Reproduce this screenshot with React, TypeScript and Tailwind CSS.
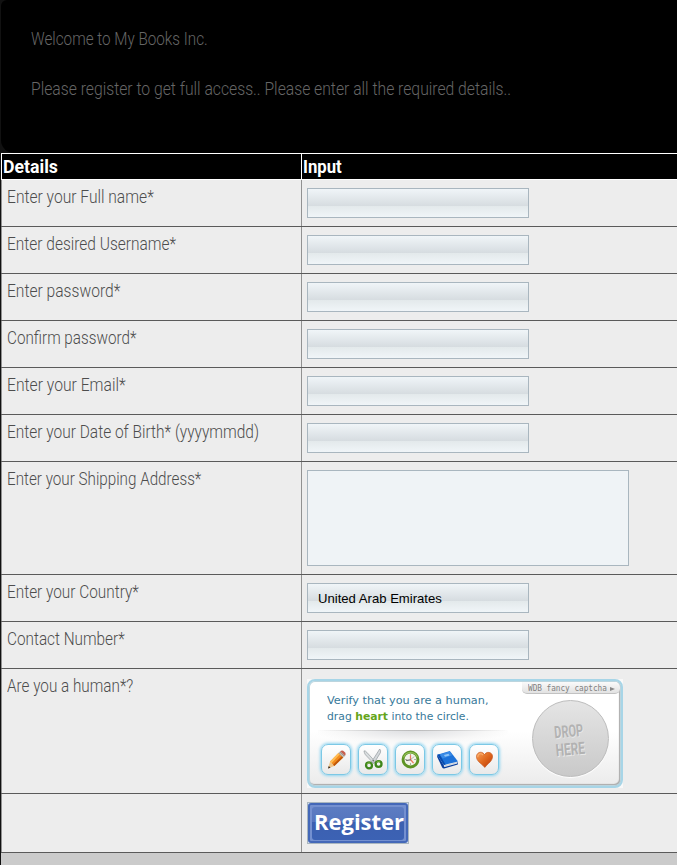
import { useLayoutEffect, useRef, useState, type ReactNode } from "react";

/** Text squeezed horizontally to a given width, for condensed lettering. */
function Fit({ w, className = "", children }: { w: number; className?: string; children: ReactNode }) {
  const ref = useRef<HTMLSpanElement>(null);
  const [scale, setScale] = useState(1);
  useLayoutEffect(() => {
    if (ref.current) setScale(w / ref.current.offsetWidth);
  }, [w]);
  return (
    <span className="block overflow-visible" style={{ width: w }}>
      <span
        ref={ref}
        className={"inline-block origin-left whitespace-nowrap " + className}
        style={{ transform: `scaleX(${scale})` }}
      >
        {children}
      </span>
    </span>
  );
}

const field =
  "block h-[30px] w-[222px] appearance-none rounded-none border border-[#a9b6bf] bg-[linear-gradient(to_bottom,#f0f5f8_0%,#d6dce0_60.7%,#e3e9eb_60.7%,#f0f5f8_100%)] px-2.5 font-['Liberation_Sans',Arial,sans-serif] text-[13px] text-black outline-none";

function Row({ label, w = 0, h = "h-[47px]", children }: { label?: string; w?: number; h?: string; children: ReactNode }) {
  return (
    <div className={"flex border-b border-[#5a5a5a] " + h}>
      <div className="w-[300px] shrink-0 border-l border-[#919191] pl-[5px] pt-[5px]">
        {label && (
          <Fit w={w} className="text-[18px] font-light leading-6 text-[#4d4d4d]">
            {label}
          </Fit>
        )}
      </div>
      <div className="grow border-l border-[#919191] pl-[5px] pt-2">{children}</div>
    </div>
  );
}

function Tile({ children }: { children: ReactNode }) {
  return (
    <div className="flex h-[31px] w-[30px] items-center justify-center rounded-[7px] border border-[#7cc8e5] bg-gradient-to-b from-white to-[#e9e9e9] shadow-[0_0_3px_1px_#8fd4f0]">
      <svg width="21" height="21" viewBox="0 0 22 22" className="shrink-0">
        {children}
      </svg>
    </div>
  );
}

function Pencil() {
  return (
    <Tile>
      <path d="M2 20.500 L4.300 13.200 L8.700 17.800 Z" fill="#efc68a" />
      <path d="M4.300 13.200 L13 4.200 L18 9 L8.700 17.800 Z" fill="#f28c1e" />
      <path d="M4.300 13.200 L13 4.200 L14.500 5.600 L5.700 14.800 Z" fill="#ffbd55" />
      <path d="M7.400 16.400 L16.400 7.500 L18 9 L8.700 17.800 Z" fill="#bf570a" />
      <path d="M13 4.200 L15 2.300 L20 7 L18 9 Z" fill="#9c9690" />
      <path d="M15 2.300 Q16.500 1 18 1.800 L20.300 4 Q21 5.800 20 7 Z" fill="#c65e4d" />
      <path d="M13.800 3.600 L18.700 8.200" stroke="#e5ded8" strokeWidth=".7" />
      <path d="M2 20.500 L2.900 17.700 L4.800 19.600 Z" fill="#3b2a20" />
    </Tile>
  );
}

function Scissors() {
  return (
    <Tile>
      <path d="M1 2 Q2.500 1.500 4 3.500 L13 13.500 L11 15 L2.500 6 Q1.200 4 1 2Z" fill="#d9dddf" stroke="#858c90" strokeWidth=".6" />
      <path d="M17.500 0 Q19 1.500 18.300 3.800 L11.500 15 L9 13.500 Z" fill="#d5d9dc" stroke="#7e878c" strokeWidth=".6" />
      <circle cx="6.300" cy="17.200" r="3.100" fill="none" stroke="#3e851a" strokeWidth="2.400" />
      <circle cx="16.300" cy="15.700" r="3.100" fill="none" stroke="#3e851a" strokeWidth="2.400" />
      <path d="M3.900 15.800 A2.900 2.900 0 0 1 7.700 14.800 M14 14.100 A2.900 2.900 0 0 1 18 13.500" fill="none" stroke="#7bb63c" />
      <circle cx="11" cy="12.300" r=".8" fill="#666" />
    </Tile>
  );
}

function Clock() {
  return (
    <Tile>
      <circle cx="11" cy="11" r="7.800" fill="#f2f3ea" stroke="#5e9425" strokeWidth="3" />
      <path d="M3.700 8.800 A7.800 7.800 0 0 1 18.300 8.800" fill="none" stroke="#91bd55" strokeWidth="1.200" />
      <path d="M11 5.500v1.500M11 15v1.500M5.500 11h1.500M15 11h1.500" stroke="#8a8c80" />
      <path d="M11 6.500 L11 11 L14.200 14.800" fill="none" stroke="#ef795c" strokeWidth="1.300" />
      <path d="M6.500 12 L11.500 11.200" stroke="#555" strokeWidth="1.100" />
      <path d="M11 11 L15 8" stroke="#999" strokeWidth=".7" />
    </Tile>
  );
}

function Book() {
  return (
    <Tile>
      <path d="M.3 6 L7.500 17.500 L22 14 L21.800 16.300 L7.500 20.300 Q6 20.400 5.300 19 L.2 8.500Z" fill="#0b3f9d" />
      <path d="M7.500 16.600 L21 13 L21.300 15.300 L8 18.900 Q6.600 18.600 7.500 16.600Z" fill="#e9edf2" />
      <path d="M8 17.700 L21 14.200" stroke="#a6b1c0" strokeWidth=".5" />
      <path d="M.3 6 L13.500 2 L22 13 L7.200 16.800 Z" fill="#1d72d9" />
      <path d="M.3 6 L2.500 5.400 L9 16.300 L7.200 16.800Z" fill="#0a4cae" />
      <path d="M3 5.700 L13.100 2.700 L16 6.500 L6 10 Z" fill="#4c9bef" opacity=".6" />
      <path d="M7.300 6.300 L12 5 L13.200 6.700 L8.400 8.100Z" fill="#91c5f7" />
    </Tile>
  );
}

function Heart() {
  return (
    <Tile>
      <defs>
        <linearGradient id="heart" x1="0" y1="0" x2="1" y2="1">
          <stop offset="0" stopColor="#f8a15a" />
          <stop offset=".5" stopColor="#df681e" />
          <stop offset="1" stopColor="#b83709" />
        </linearGradient>
      </defs>
      <path
        d="M11 6 C9.500 3.200 6.500 2.800 4.500 4.200 C2 6 2.200 9.400 3.800 11.800 C5.500 14.500 9 16.300 11.300 19.300 C13.500 16.500 16.500 14.500 18.200 11.800 C20 8.700 19.800 5.500 17.300 4.100 C15 2.900 12.400 3.500 11 6 Z"
        fill="url(#heart)"
        stroke="#c65218"
        strokeWidth=".7"
      />
      <path d="M4 8.500 C3.800 5 7 3.800 9.500 6.300" fill="none" stroke="#ffbd7d" strokeWidth="1.200" opacity=".7" />
    </Tile>
  );
}

function Captcha() {
  return (
    <div className="mt-[2px] h-[109px] w-[316px] bg-[#f8f8f8]">
      <div className="relative flex h-full w-full rounded-[8px] border-2 border-[#a7d5e7] bg-[linear-gradient(to_bottom,#fff_0%,#fff_48%,#ebebeb_100%)] p-px shadow-[inset_0_0_0_1px_#bcd5de,inset_-1px_-1px_1px_1px_#aaa]">
        <div className="w-[222px] shrink-0 pl-2">
          <div className="h-12 pl-[9px] pt-[10px] font-['DejaVu_Sans',Verdana,sans-serif] text-[10.5px] leading-4 text-[#37799a]">
            <Fit w={161}>Verify that you are a human,</Fit>
            <Fit w={142}>
              drag <b className="text-[#65a51a]">heart</b> into the circle.
            </Fit>
          </div>
          <div className="h-[14px] w-[190px] bg-[radial-gradient(ellipse_at_top,#dcdde0_0%,#f7f7f7_55%,#ffffff00_75%)]">
            <div className="h-px bg-gradient-to-r from-transparent via-[#bbb] to-transparent" />
          </div>
          <div className="flex gap-[7px] pl-[3px]">
            <Pencil />
            <Scissors />
            <Clock />
            <Book />
            <Heart />
          </div>
        </div>
        <div className="mt-[18px] flex size-[77px] flex-col items-center justify-center rounded-full border border-[#bcbcbc] bg-gradient-to-b from-[#e5e5e5] to-[#c9c9c9] font-[Roboto,sans-serif] text-[17px] font-bold leading-[18px] text-[#b2b2b2] shadow-[0_1px_1px_#fff]">
          <div className="mt-[3px] -ml-[2px] -rotate-[5deg] [text-shadow:1px_1px_0_#e9e9e9]">
            <Fit w={29}>DROP</Fit>
            <Fit w={29}>HERE</Fit>
          </div>
        </div>
        <div className="absolute right-px top-px flex h-[12px] w-[98px] items-center rounded-b-[5px] rounded-tr-[5px] border-b border-[#c2c2c2] bg-gradient-to-b from-[#fafafa] to-[#e2e2e2] pl-[6px] pt-[2px] font-['DejaVu_Sans_Mono',monospace] text-[8px] leading-[10px] text-[#808080]">
          <Fit w={79}>WDB fancy captcha</Fit>
          <svg width="5" height="6" viewBox="0 0 5 6" className="ml-[3px]">
            <path d="M0 1 L5 3 L0 5Z" fill="#888" />
          </svg>
        </div>
      </div>
    </div>
  );
}

export default function App() {
  return (
    <div className="h-[865px] w-[677px] overflow-hidden bg-[#111] pl-px font-[Roboto,sans-serif]">
      <div className="h-[153px] rounded-bl-[13px] rounded-tl-[6px] bg-black pl-[30px] pt-[26px] text-[18px] font-light leading-[25px] text-[#666]">
        <Fit w={177}>Welcome to My Books Inc.</Fit>
        <div className="h-[25px]" />
        <Fit w={480}>Please register to get full access.. Please enter all the required details..</Fit>
      </div>
      <div className="flex h-[27px] border-y border-white bg-black text-[18px] font-bold leading-[26px] text-white">
        <div className="w-[300px] shrink-0 border-l border-white pl-px">
          <Fit w={55}>Details</Fit>
        </div>
        <div className="grow border-l border-white pl-px">
          <Fit w={39}>Input</Fit>
        </div>
      </div>
      <div className="w-[700px] bg-[#ededed]">
        <Row label="Enter your Full name*" w={146.5}><input className={field} /></Row>
        <Row label="Enter desired Username*" w={169.5}><input className={field} /></Row>
        <Row label="Enter password*" w={113.5}><input type="password" className={field} /></Row>
        <Row label="Confirm password*" w={129.5}><input type="password" className={field} /></Row>
        <Row label="Enter your Email*" w={118.5}><input className={field} /></Row>
        <Row label="Enter your Date of Birth* (yyyymmdd)" w={252}><input className={field} /></Row>
        <Row label="Enter your Shipping Address*" w={194.5} h="h-[113px]">
          <textarea className="block h-[96px] w-[322px] resize-none border border-[#a9b6bf] bg-[#eff3f6] outline-none" />
        </Row>
        <Row label="Enter your Country*" w={131.5}>
          <div className={field + " leading-[30px]"}>
            <Fit w={124}>United Arab Emirates</Fit>
          </div>
        </Row>
        <Row label="Contact Number*" w={117.5}><input className={field} /></Row>
        <Row label="Are you a human*?" w={126.5} h="h-[125px]"><Captcha /></Row>
        <Row h="h-[59px]">
          <button className="block h-[42px] w-[102px] border border-[#a9b6bf] bg-[#dfe6f3] text-white">
            <span className="flex h-[40px] w-[100px] items-center rounded-[3px] border-2 border-[#4468b8] bg-[#7490d0] p-[2px]">
              <span className="flex h-[33px] w-[92px] items-center rounded-[3px] bg-[linear-gradient(to_bottom,#5c7cc2_0%,#5575be_45%,#3c60b0_46%,#3c62b4_100%)] font-['Open_Sans',sans-serif] text-[21px] font-bold leading-[30px]">
                <span className="-mt-[2px] block">
                  <Fit w={90}>Register</Fit>
                </span>
              </span>
            </span>
          </button>
        </Row>
      </div>
      <div className="h-3 bg-[#cbcbcb]" />
    </div>
  );
}
